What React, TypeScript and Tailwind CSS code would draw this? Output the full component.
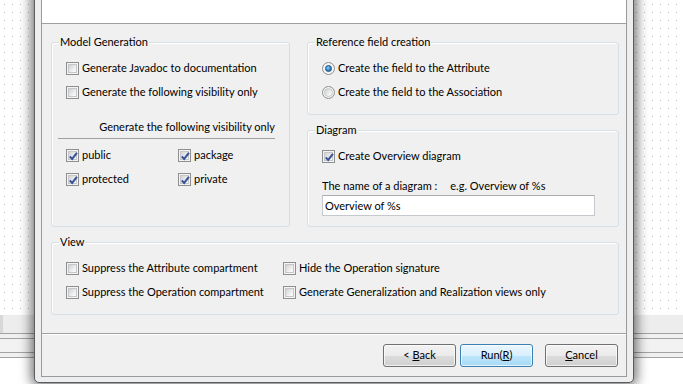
import React from "react";

const FONT = { fontFamily: 'Lato, "Noto Sans", sans-serif' };

function Check({ checked = false }: { checked?: boolean }) {
  return (
    <span className="relative flex h-[13px] w-[13px] shrink-0 items-center justify-center border border-[#8e8f8f] bg-[#f4f4f4]">
      <span className="h-[9px] w-[9px] border border-[#c4c6c9] bg-[linear-gradient(135deg,#cfd1d4,#f3f3f3_70%,#fbfbfb)]" />
      {checked && (
        <svg className="absolute left-[1px] top-[1px]" width="11" height="11" viewBox="0 0 11 11">
          <path d="M1.8 5.4 L4.2 7.9 L8.9 1.9" fill="none" stroke="#3b5295" strokeWidth="2.1" strokeLinejoin="miter" />
        </svg>
      )}
    </span>
  );
}

function Radio({ checked = false }: { checked?: boolean }) {
  return (
    <span className="flex h-[13px] w-[13px] shrink-0 items-center justify-center rounded-full border border-[#8e8f8f] bg-[#f4f4f4]">
      {checked ? (
        <span className="h-[7px] w-[7px] rounded-full border border-[#1c4f7e] bg-[radial-gradient(circle_at_40%_35%,#9bd2f3,#2f86c9_55%,#17558f)]" />
      ) : (
        <span className="h-[9px] w-[9px] rounded-full border border-[#c4c6c9] bg-[linear-gradient(135deg,#cfd1d4,#f3f3f3_70%,#fbfbfb)]" />
      )}
    </span>
  );
}

function CheckRow({ label, checked = false, radio = false }: { label: string; checked?: boolean; radio?: boolean }) {
  return (
    <div className="flex h-[24px] items-center gap-[3px]">
      {radio ? <Radio checked={checked} /> : <Check checked={checked} />}
      <span className="whitespace-nowrap leading-[14px]">{label}</span>
    </div>
  );
}

function Group({ title, className = "", children }: { title: string; className?: string; children: React.ReactNode }) {
  return (
    <div className={"relative rounded-[3px] border border-[#d5dfe5] shadow-[inset_1px_1px_0_#ffffff] " + className}>
      <span className="absolute left-[7px] top-[-8px] bg-[#f0f0f0] px-[1px] leading-[14px]">{title}</span>
      {children}
    </div>
  );
}

function Button({ children, primary = false }: { children: React.ReactNode; primary?: boolean }) {
  return (
    <div
      className={
        "flex h-[23px] w-[73px] items-center justify-center rounded-[3px] border shadow-[inset_0_0_0_1px_rgba(255,255,255,0.7)] " +
        (primary
          ? "border-[#3c7fb1] bg-[linear-gradient(#eaf6fd,#d9f0fc_50%,#bee6fd_50%,#a7d9f5)]"
          : "border-[#707070] bg-[linear-gradient(#f2f2f2,#ebebeb_50%,#dddddd_50%,#cfcfcf)]")
      }
    >
      {children}
    </div>
  );
}

export default function App() {
  return (
    <div
      className="relative h-[384px] w-[683px] overflow-hidden bg-white bg-[radial-gradient(circle_at_4.5px_4.5px,#bdbdbd_0.55px,transparent_1px)] bg-[length:8px_8px] text-[11px] text-black"
      style={FONT}
    >
      {/* background band behind the dialog */}
      <div className="absolute left-0 right-0 top-[315px] flex flex-col">
        <div className="h-[18px] border-l-[3px] border-[#d8d8d8] bg-[#ededed]" />
        <div className="h-px bg-[#a3a3a3]" />
        <div className="h-[4px] bg-[#f0f0f0]" />
        <div className="h-px bg-[#a3a3a3]" />
        <div className="h-[13px] bg-[#f2f2f2]" />
        <div className="h-px bg-[#a3a3a3]" />
        <div className="h-[4px] bg-[#f0f0f0]" />
        <div className="h-px bg-[#a3a3a3]" />
        <div className="h-[26px] bg-white" />
      </div>

      {/* dialog window */}
      <div className="absolute left-[34px] top-[-20px] flex h-[403px] w-[600px] flex-col rounded-b-[5px] border border-[#5c5c5c] bg-[#eceef0] px-[6px] pb-[5px] pt-[6px] shadow-[0_0_12px_3px_rgba(0,0,0,0.55)]">
        <div className="flex flex-1 flex-col border border-[#9a9a9a] bg-[#f0f0f0]">
          <div className="h-[36px] border-b border-[#a0a0a0] bg-white" />
          <div className="flex flex-1 flex-col pl-[9px] pr-[7px] pt-[18px]">
            <div className="flex gap-[17px]">
              <Group title="Model Generation" className="h-[185px] w-[239px]">
                <div className="flex flex-col pl-[14px] pt-[13px]">
                  <CheckRow label="Generate Javadoc to documentation" />
                  <CheckRow label="Generate the following visibility only" />
                </div>
                <div className="ml-[6px] mr-[14px] mt-[11px] flex h-[24px] items-center justify-end border-b border-[#a0a0a0]">
                  <span className="leading-[14px]">Generate the following visibility only</span>
                </div>
                <div className="mt-[4px] grid grid-cols-[112px_1fr] pl-[14px]">
                  <CheckRow label="public" checked />
                  <CheckRow label="package" checked />
                  <CheckRow label="protected" checked />
                  <CheckRow label="private" checked />
                </div>
              </Group>
              <div className="flex w-[312px] flex-col gap-[15px]">
                <Group title="Reference field creation" className="h-[73px]">
                  <div className="flex flex-col pl-[14px] pt-[13px]">
                    <CheckRow radio checked label="Create the field to the Attribute" />
                    <CheckRow radio label="Create the field to the Association" />
                  </div>
                </Group>
                <Group title="Diagram" className="h-[97px]">
                  <div className="flex flex-col pl-[14px] pr-[23px] pt-[13px]">
                    <CheckRow checked label="Create Overview diagram" />
                    <div className="mt-[11px] flex h-[14px] items-center gap-[13px] leading-[14px] whitespace-nowrap">
                      <span>The name of a diagram :</span>
                      <span>e.g. Overview of %s</span>
                    </div>
                    <div className="mt-[2px] flex h-[21px] items-center border border-[#c5c9ce] border-t-[#abadb3] bg-white pl-[2px]">
                      <span className="leading-[14px]">Overview of %s</span>
                    </div>
                  </div>
                </Group>
              </div>
            </div>
            <Group title="View" className="mt-[15px] h-[73px] w-[568px]">
              <div className="grid grid-cols-[217px_1fr] pl-[14px] pt-[13px]">
                <CheckRow label="Suppress the Attribute compartment" />
                <CheckRow label="Hide the Operation signature" />
                <CheckRow label="Suppress the Operation compartment" />
                <CheckRow label="Generate Generalization and Realization views only" />
              </div>
            </Group>
          </div>
          <div className="flex h-[43px] items-start justify-end border-t border-[#a0a0a0] pr-[8px] pt-[10px] shadow-[inset_0_1px_0_#ffffff]">
            <Button>
              <span>
                &lt; <span className="underline">B</span>ack
              </span>
            </Button>
            <div className="ml-[4px]">
              <Button primary>
                <span>
                  Run(<span className="underline">R</span>)
                </span>
              </Button>
            </div>
            <div className="ml-[12px]">
              <Button>
                <span>
                  <span className="underline">C</span>ancel
                </span>
              </Button>
            </div>
          </div>
        </div>
      </div>
    </div>
  );
}
